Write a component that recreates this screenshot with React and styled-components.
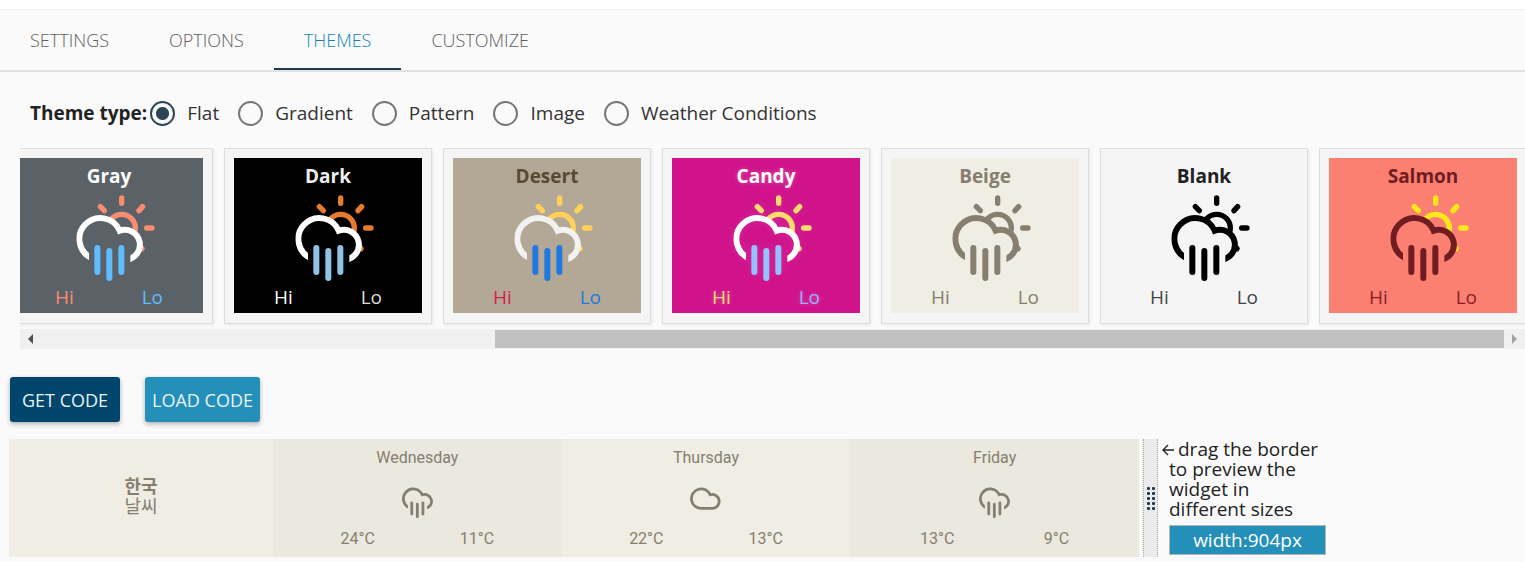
import React from 'react'
import { useState, useId } from 'react'
import styled, { createGlobalStyle } from 'styled-components'

const tabs = ['Settings', 'Options', 'Themes', 'Customize']
const types = ['Flat', 'Gradient', 'Pattern', 'Image', 'Weather Conditions']
const themes = [
  { name: 'Gray', bg: '#5a6267', title: '#ffffff', sun: '#f98d70', cloud: '#ffffff', rain: '#5ebcff', hi: '#f98d70', lo: '#5ebcff' },
  { name: 'Dark', bg: '#000000', title: '#eeeeee', sun: '#e67b2e', cloud: '#ffffff', rain: '#8fc3e8', hi: '#ffffff', lo: '#dddddd' },
  { name: 'Desert', bg: '#b3a896', title: '#594a31', sun: '#ffd257', cloud: '#f2f2f2', rain: '#2179e0', hi: '#d32050', lo: '#2179e0' },
  { name: 'Candy', bg: '#d0128b', title: '#ffffff', sun: '#ffdd6b', cloud: '#ffffff', rain: '#94c2ff', hi: '#ffdd6b', lo: '#94b4ff', glow: true },
  { name: 'Beige', bg: '#f0ede4', title: '#867e6e', sun: '#867e6e', cloud: '#867e6e', rain: '#867e6e', hi: '#867e6e', lo: '#867e6e' },
  { name: 'Blank', bg: 'transparent', title: '#222222', sun: '#000000', cloud: '#000000', rain: '#000000', hi: '#444444', lo: '#444444' },
  { name: 'Salmon', bg: '#fb8072', title: '#701c20', sun: '#ffe81a', cloud: '#701c20', rain: '#701c20', hi: '#8a2025', lo: '#8a2025' },
]
const days = [
  { day: 'Wednesday', icon: 'rain', hi: '24°C', lo: '11°C' },
  { day: 'Thursday', icon: 'cloud', hi: '22°C', lo: '13°C' },
  { day: 'Friday', icon: 'rain', hi: '13°C', lo: '9°C' },
]

const OpenCloud = ({ color, id }) => (
  <>
    <mask id={id} maskUnits='userSpaceOnUse' x='0' y='0' width='236' height='258'>
      <rect width='236' height='258' fill='#fff'/>
      <rect x='38' y='160' width='124' height='60' fill='#000'/>
    </mask>
    <path mask={`url(#${id})`} d='M50 191A63 63 0 1 1 130 107A45 45 0 1 1 150 194' fill='none' stroke={color} strokeWidth='18'/>
  </>
)
const Rain = ({ color }) => (
  <path d='M63 159V231M99 168V249M135 159V231' fill='none' stroke={color} strokeWidth='18' strokeLinecap='round'/>
)
// extra room on the left keeps the cloud centred, not the sun
const SunRainIcon = ({ sun, cloud, rain }) => {
  const id = useId()
  return (
    <svg width='92' height='86' viewBox='-40 0 276 258' aria-hidden='true'>
      <mask id={id + 's'} maskUnits='userSpaceOnUse' x='0' y='0' width='236' height='258'>
        <rect width='236' height='258' fill='#fff'/>
        <circle cx='72' cy='132' r='70' fill='#000'/>
        <circle cx='145' cy='149' r='52' fill='#000'/>
        <rect x='0' y='160' width='150' height='98' fill='#000'/>
      </mask>
      <g mask={`url(#${id}s)`} fill='none' stroke={sun} strokeWidth='16' strokeLinecap='round'>
        <circle cx='136' cy='99' r='41'/>
        <path d='M136 9V25M199 35L188 47M72 35L84 47M211 99H227M186 149L197 161'/>
      </g>
      <OpenCloud color={cloud} id={id + 'c'}/>
      <Rain color={rain}/>
    </svg>
  )
}
const DayIcon = ({ type }) => {
  const id = useId()
  return (
    <svg width='31' height='32' viewBox='0 57 200 206' aria-hidden='true'>
      {type === 'rain' ? (
        <>
          <OpenCloud color='#867e6e' id={id}/>
          <Rain color='#867e6e'/>
        </>
      ) : (
        <path d='M72 195A63 63 0 1 1 130 107A45 45 0 1 1 145 195Z' fill='none' stroke='#867e6e' strokeWidth='18'/>
      )}
    </svg>
  )
}

const App = () => {
  const [tab, setTab] = useState('Themes')
  const [type, setType] = useState('Flat')
  return (
    <Page>
      <Global/>
      <Tabs>
        {tabs.map((t) => (
          <Tab key={t} href={'#' + t.toLowerCase()} $active={t === tab} onClick={() => setTab(t)}>{t}</Tab>
        ))}
      </Tabs>
      <TypeRow>
        <legend>Theme type:</legend>
        {types.map((t) => (
          <TypeLabel key={t}>
            <Radio type='radio' name='type' checked={t === type} onChange={() => setType(t)}/>
            {t}
          </TypeLabel>
        ))}
      </TypeRow>
      <Scroller>
        <CardList>
          {themes.map((t) => (
            <Card key={t.name} type='button'>
              <Swatch $bg={t.bg} $glow={t.glow}>
                <Title $color={t.title}>{t.name}</Title>
                <SunRainIcon sun={t.sun} cloud={t.cloud} rain={t.rain}/>
                <HiLo>
                  <Temp $color={t.hi}>Hi</Temp>
                  <Temp $color={t.lo}>Lo</Temp>
                </HiLo>
              </Swatch>
            </Card>
          ))}
        </CardList>
        <ScrollBar>
          <Arrow type='button' aria-label='Scroll left'>
            <svg width='5' height='10' viewBox='0 0 5 10'><path d='M5 0V10L0 5Z' fill='#505050'/></svg>
          </Arrow>
          <Track><Thumb/></Track>
          <Arrow type='button' aria-label='Scroll right'>
            <svg width='5' height='10' viewBox='0 0 5 10'><path d='M0 0V10L5 5Z' fill='#a3a3a3'/></svg>
          </Arrow>
        </ScrollBar>
      </Scroller>
      <Actions>
        <Btn type='button' $bg='#00456b' $pad='12px'>GET CODE</Btn>
        <Btn type='button' $bg='#2490b9' $pad='7px'>LOAD CODE</Btn>
      </Actions>
      <Preview>
        <Widget>
          <Place>
            <b>한국</b>
            <span>날씨</span>
          </Place>
          {days.map((d) => (
            <Day key={d.day}>
              <span>{d.day}</span>
              <DayIcon type={d.icon}/>
              <DayTemps>
                <span>{d.hi}</span>
                <span>{d.lo}</span>
              </DayTemps>
            </Day>
          ))}
        </Widget>
        <Handle role='separator' aria-orientation='vertical'>
          <svg width='8' height='23' viewBox='0 0 8 23' fill='#1d3b4f'>
            {[0, 5, 10, 15, 20].map((y) => (
              <g key={y}>
                <rect x='0' y={y} width='3' height='3' rx='1'/>
                <rect x='5' y={y} width='3' height='3' rx='1'/>
              </g>
            ))}
          </svg>
        </Handle>
        <Side>
          <Hint>
            <svg width='12' height='12' viewBox='0 0 12 12' fill='none' stroke='#222' strokeWidth='1.4' aria-hidden='true'>
              <path d='M12 6H1M6 1L1 6L6 11'/>
            </svg>
            drag the border to preview the widget in different sizes
          </Hint>
          <Size>width:904px</Size>
        </Side>
      </Preview>
    </Page>
  )
}

export default App

const Global = createGlobalStyle`
  * {
    box-sizing:border-box;
  }
  body {
    margin:0;
    background-color:#fafafa;
    color:#222;
    font-family:'Open Sans', sans-serif;
    font-size:19px;
    overflow-x:hidden;
  }
  button {
    font:inherit;
  }
`;
const Page = styled.div`
  border-top:9px solid white;
`;
const Tabs = styled.nav`
  display:flex;
  height:63px;
  border-top:1px solid #eee;
  border-bottom:2px solid #e2e2e2;
`;
const Tab = styled.a`
  padding:0 30px;
  line-height:60px;
  font-size:18px;
  font-weight:300;
  text-transform:uppercase;
  text-decoration:none;
  color:${(p) => (p.$active ? '#0f84b3' : '#606060')};
  border-bottom:2px solid ${(p) => (p.$active ? '#1a3a4e' : 'transparent')};
`;
const TypeRow = styled.fieldset`
  display:flex;
  align-items:center;
  gap:19px;
  margin:0;
  border:0;
  padding:28px 30px 22px;
  legend {
    float:left;
    padding:0;
    margin-right:-16px;
    font-weight:bold;
  }
`;
const TypeLabel = styled.label`
  display:flex;
  align-items:center;
  gap:12px;
  line-height:25px;
  color:#333;
`;
const Radio = styled.input`
  appearance:none;
  width:25px;
  height:25px;
  margin:0;
  border:2px solid #777;
  border-radius:50%;
  &:checked {
    border-color:#2c4454;
    background:radial-gradient(circle, #2c4454 6px, transparent 7px);
  }
`;
const Scroller = styled.section`
  margin-left:20px;
  overflow:hidden;
`;
const CardList = styled.div`
  display:flex;
  gap:11px;
  margin-left:-15px;
  padding-bottom:5px;
`;
const Card = styled.button`
  flex:0 0 208px;
  padding:9px 9px 10px;
  border:1px solid #ddd;
  background-color:#f5f5f5;
  box-shadow:1px 1px 3px rgba(0,0,0,0.08);
`;
const Swatch = styled.span`
  display:flex;
  flex-direction:column;
  align-items:center;
  height:155px;
  padding-top:5px;
  background-color:${(p) => p.$bg};
  svg {
    margin:6px 0 3px;
    filter:${(p) => (p.$glow ? 'drop-shadow(0 0 4px rgba(255,255,255,0.1))' : 'none')};
  }
  text-shadow:${(p) => (p.$glow ? '0 0 5px rgba(255,255,255,0.3)' : 'none')};
`;
const Title = styled.span`
  font-weight:bold;
  line-height:26px;
  color:${(p) => p.$color};
`;
const HiLo = styled.span`
  display:flex;
  align-self:stretch;
  justify-content:space-around;
  padding:0 6px;
  line-height:26px;
`;
const Temp = styled.span`
  color:${(p) => p.$color};
`;
const ScrollBar = styled.div`
  display:flex;
  height:20px;
  background-color:#f0f0f0;
`;
const Arrow = styled.button`
  display:flex;
  align-items:center;
  justify-content:center;
  width:21px;
  padding:0;
  border:0;
  background:none;
`;
const Track = styled.div`
  flex:1;
  padding:1px 0;
`;
const Thumb = styled.div`
  width:69%;
  height:18px;
  margin-left:auto;
  background-color:#c1c1c1;
`;
const Actions = styled.div`
  display:flex;
  gap:25px;
  padding:28px 10px 17px;
`;
const Btn = styled.button`
  height:45px;
  padding:0 ${(p) => p.$pad};
  border:0;
  border-radius:3px;
  color:#e8f3f8;
  font-size:18px;
  background-color:${(p) => p.$bg};
  box-shadow:0 2px 5px rgba(0,0,0,0.3);
`;
const Preview = styled.div`
  display:flex;
  padding:0 10px 5px 9px;
`;
const Widget = styled.div`
  flex:1;
  display:grid;
  grid-template-columns:264px 1fr 1fr 1fr;
  height:118px;
  color:#867e6e;
  background-color:#f0ede4;
  font-family:Roboto, 'Noto Sans CJK KR', sans-serif;
  font-size:16px;
`;
const Place = styled.div`
  display:flex;
  flex-direction:column;
  align-items:center;
  justify-content:center;
  padding-bottom:2px;
  font-size:18px;
  line-height:20px;
`;
const Day = styled.div`
  display:flex;
  flex-direction:column;
  align-items:center;
  justify-content:space-between;
  padding:9px 0 8px;
  line-height:20px;
  &:nth-child(even) {
    background-color:#ebe8df;
  }
  svg {
    margin-top:8px;
  }
`;
const DayTemps = styled.div`
  display:flex;
  justify-content:space-around;
  align-self:stretch;
  padding:0 25px;
`;
const Handle = styled.div`
  display:flex;
  align-items:center;
  justify-content:center;
  width:15px;
  margin-left:4px;
  border:1px dotted #aaa;
  border-width:0 1px;
  background-color:#ebebeb;
  cursor:col-resize;
`;
const Side = styled.div`
  width:357px;
  padding-left:11px;
`;
const Hint = styled.p`
  width:157px;
  margin:0 0 6px;
  line-height:20px;
  text-indent:-7px;
  svg {
    margin-right:4px;
  }
`;
const Size = styled.div`
  width:157px;
  border:1px solid #b5b5b5;
  line-height:28px;
  text-align:center;
  color:white;
  background-color:#2490b9;
`;
